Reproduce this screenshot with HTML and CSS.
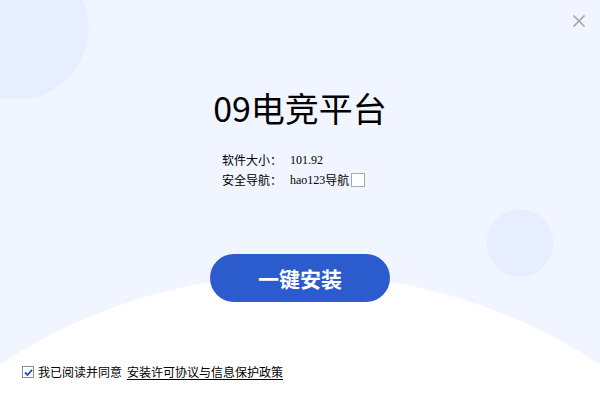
FILE: index.html
```html
<!DOCTYPE html>
<html lang="zh-CN">
<head>
<meta charset="utf-8">
<title>09电竞平台</title>
<link rel="stylesheet" href="styles.css">
</head>
<body>
<div class="window">
  <button class="close" aria-label="关闭">
    <svg width="14" height="14" viewBox="0 0 14 14"><path d="M1.5 1.5 L12.5 12.5 M12.5 1.5 L1.5 12.5" stroke="#a3a3a3" stroke-width="1.6" fill="none"/></svg>
  </button>
  <h1 class="title">09电竞平台</h1>
  <div class="info">
    <span class="label">软件大小：</span><span class="value">101.92</span>
    <span class="label">安全导航：</span><span class="value">hao123<span class="cjk">导航</span><span class="box"></span></span>
  </div>
  <button class="install">一键安装</button>
  <div class="footer">
    <span class="check">
      <svg width="9" height="9" viewBox="0 0 9 9"><path d="M1 4.5 L3.5 7 L8 1.8" stroke="#1f4fb5" stroke-width="1.8" fill="none"/></svg>
    </span>
    <span class="agree">我已阅读并同意</span>
    <a class="link">安装许可协议与信息保护政策</a>
  </div>
</div>
</body>
</html>
```
FILE: styles.css
```css
* { box-sizing: border-box; }
html, body { margin: 0; padding: 0; }
body { width: 600px; height: 400px; overflow: hidden; }

.window {
  position: relative;
  width: 600px;
  height: 400px;
  display: flex;
  flex-direction: column;
  align-items: center;
  font-family: "Noto Sans CJK SC", sans-serif;
  color: #000;
  background:
    radial-gradient(circle at 17px 28px, #e6eeff 71px, rgba(230,238,255,0) 71.8px),
    radial-gradient(circle at 520px 243px, #e6eeff 33px, rgba(230,238,255,0) 33.8px),
    radial-gradient(circle at 300px 820px, #ffffff 545px, rgba(255,255,255,0) 546px),
    #f0f5ff;
}

.close {
  position: absolute;
  top: 14px;
  right: 14px;
  width: 14px;
  height: 14px;
  padding: 0;
  border: 0;
  background: none;
  display: flex;
}

.title {
  margin: 88px 0 0;
  font-size: 34px;
  line-height: 40px;
  font-weight: 400;
  letter-spacing: 0;
}

.info {
  margin-top: 22px;
  width: 156px;
  display: grid;
  grid-template-columns: 68px auto;
  font-size: 12px;
  line-height: 20px;
}
.value {
  font-family: "Liberation Serif", serif;
  display: flex;
  align-items: center;
}
.cjk { font-family: "Noto Sans CJK SC", sans-serif; }
.box {
  width: 14px;
  height: 14px;
  margin-left: 2px;
  background: #fff;
  border: 1px solid #a8a8a8;
}

.install {
  margin-top: 64px;
  width: 180px;
  height: 48px;
  border: 0;
  border-radius: 24px;
  background: #2b5bcc;
  color: #fff;
  font-family: "Noto Sans CJK SC", sans-serif;
  font-size: 21px;
  font-weight: 700;
  letter-spacing: 0;
  padding: 0;
}

.footer {
  margin-top: auto;
  align-self: flex-start;
  padding: 0 0 18px 22px;
  display: flex;
  align-items: center;
  font-size: 12px;
  line-height: 20px;
}
.check {
  width: 12px;
  height: 12px;
  border: 1px solid #8c8c8c;
  background: #fff;
  display: flex;
  align-items: center;
  justify-content: center;
  margin-right: 4px;
}
.agree { margin-right: 5px; }
.link {
  color: #000;
  text-decoration: underline;
  text-underline-offset: 2px;
}
```
